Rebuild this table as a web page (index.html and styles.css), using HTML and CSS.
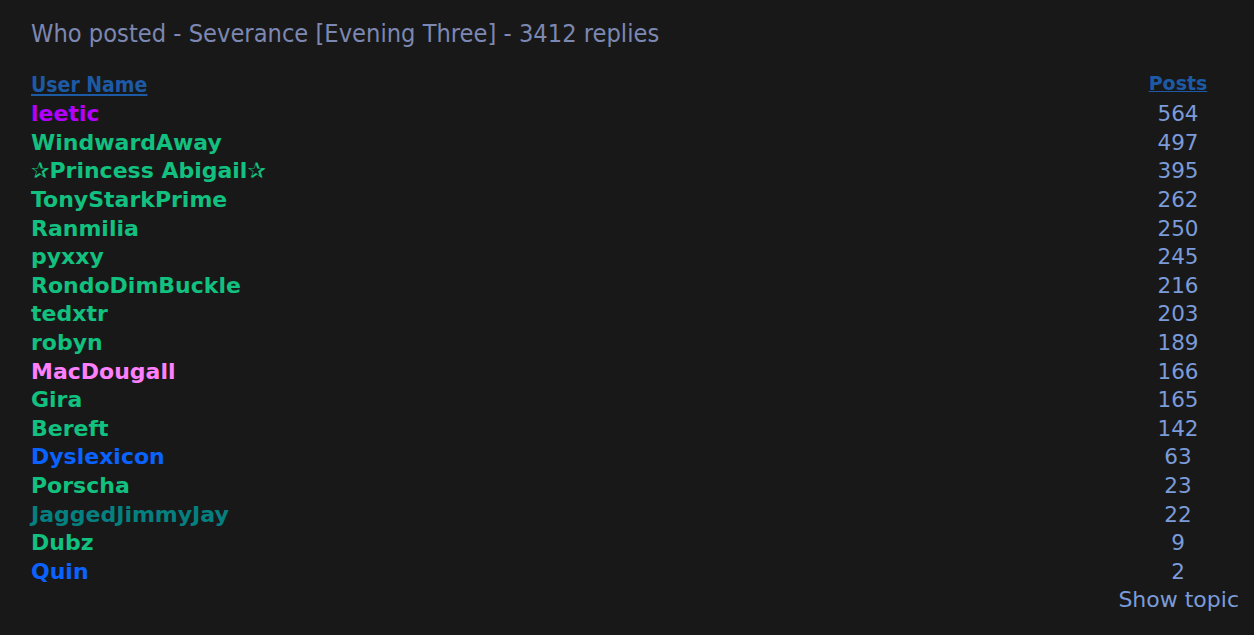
FILE: index.html
```html
<!DOCTYPE html>
<html lang="en">
  <head>
    <meta charset="UTF-8" />
    <title>Who posted</title>
    <link rel="stylesheet" href="styles.css">
  </head>
  <body>
    <div class="wrap">
      <h1 class="title">Who posted - Severance [Evening Three] - 3412 replies</h1>
      <table class="posters">
        <tr>
          <th class="name-head"><a href="#">User Name</a></th>
          <th class="posts-head"><a href="#">Posts</a></th>
        </tr>
        <tr><td class="user purple">leetic</td><td class="count">564</td></tr>
        <tr><td class="user green">WindwardAway</td><td class="count">497</td></tr>
        <tr><td class="user green">&#10032;Princess Abigail&#10032;</td><td class="count">395</td></tr>
        <tr><td class="user green">TonyStarkPrime</td><td class="count">262</td></tr>
        <tr><td class="user green">Ranmilia</td><td class="count">250</td></tr>
        <tr><td class="user green">pyxxy</td><td class="count">245</td></tr>
        <tr><td class="user green">RondoDimBuckle</td><td class="count">216</td></tr>
        <tr><td class="user green">tedxtr</td><td class="count">203</td></tr>
        <tr><td class="user green">robyn</td><td class="count">189</td></tr>
        <tr><td class="user pink">MacDougall</td><td class="count">166</td></tr>
        <tr><td class="user green">Gira</td><td class="count">165</td></tr>
        <tr><td class="user green">Bereft</td><td class="count">142</td></tr>
        <tr><td class="user blue">Dyslexicon</td><td class="count">63</td></tr>
        <tr><td class="user green">Porscha</td><td class="count">23</td></tr>
        <tr><td class="user teal">JaggedJimmyJay</td><td class="count">22</td></tr>
        <tr><td class="user green">Dubz</td><td class="count">9</td></tr>
        <tr><td class="user blue">Quin</td><td class="count">2</td></tr>
      </table>
      <div class="footer"><a href="#">Show topic</a></div>
    </div>
  </body>
</html>
```

FILE: styles.css
```css
body {
  margin: 0;
  background-color: #181818;
  font-family: "DejaVu Sans", Verdana, sans-serif;
}
.wrap {
  padding: 19px 15px 0 31px;
}
.title {
  font-family: "DejaVu Sans Condensed", "DejaVu Sans", sans-serif;
  font-weight: normal;
  font-size: 25.2px;
  color: #7c87b2;
  margin: 0 0 25px 0;
}
.posters {
  width: 100%;
  border-collapse: collapse;
}
.posters th {
  padding: 0 0 2px 0;
  line-height: 25px;
  vertical-align: bottom;
}
.posters th a {
  color: #1d5aa6;
  text-decoration: underline;
}
.name-head {
  text-align: left;
  font-family: "DejaVu Sans Condensed", "DejaVu Sans", sans-serif;
  font-size: 21px;
  font-weight: bold;
}
.posters .posts-head {
  text-align: center;
  font-size: 19px;
  font-weight: bold;
  width: 122px;
  line-height: 21px;
  padding-bottom: 6px;
}
.posters td {
  padding: 0;
  height: 28.6px;
  line-height: 28px;
}
.user {
  font-size: 22px;
  font-weight: bold;
}
.count {
  text-align: center;
  font-size: 21.5px;
  color: #7b9bd9;
}
.purple { color: #b400ff; }
.green { color: #12c07f; }
.pink { color: #ff80ff; }
.blue { color: #0a62ff; }
.teal { color: #048080; }
.footer {
  text-align: right;
  font-size: 22px;
  margin-top: 1px;
}
.footer a {
  color: #7b9bd9;
  text-decoration: none;
}
```
